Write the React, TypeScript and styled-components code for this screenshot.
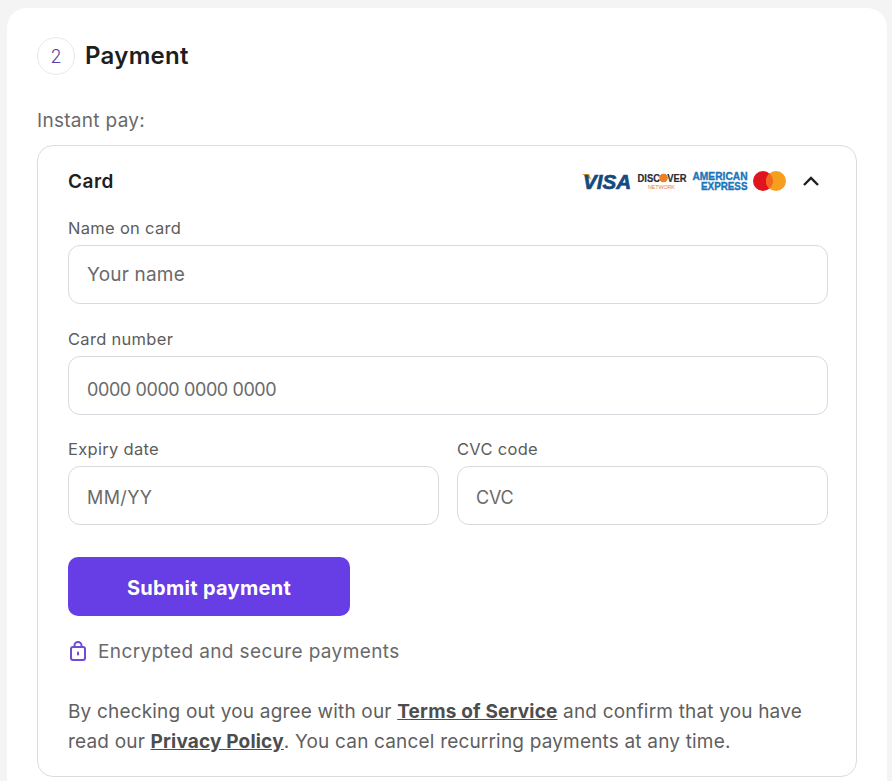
import React from 'react';
import styled, { createGlobalStyle } from 'styled-components';

const GlobalStyle = createGlobalStyle`
  html, body {
    margin: 0;
    padding: 0;
    background: #f4f4f5;
    font-family: 'Inter', 'Liberation Sans', sans-serif;
  }
  * { box-sizing: border-box; }
`;

const Page = styled.div`
  width: 892px;
  height: 781px;
  overflow: hidden;
  padding: 8px 7px 0;
`;

const Panel = styled.section`
  width: 880px;
  background: #fff;
  border-radius: 20px 20px 0 0;
  padding: 29px 30px 0;
  height: 790px;
`;

const Header = styled.div`
  display: flex;
  align-items: center;
  gap: 10px;
  height: 38px;
`;

const StepBadge = styled.div`
  width: 38px;
  height: 38px;
  border-radius: 50%;
  border: 1px solid #e8e8ee;
  color: #5b3fa8;
  font-size: 18px;
  font-weight: 300;
  display: flex;
  align-items: center;
  justify-content: center;
`;

const Title = styled.h2`
  margin: 0 0 1px;
  font-size: 24px;
  font-weight: 600;
  color: #1d1e20;
  letter-spacing: 0.3px;
`;

const Instant = styled.div`
  margin-top: 31px;
  font-size: 19px;
  line-height: 30px;
  color: #6a6a6a;
  letter-spacing: 0.3px;
`;

const MethodCard = styled.div`
  margin-top: 9px;
  width: 820px;
  border: 1px solid #dadce0;
  border-radius: 16px;
  padding: 20px 28px 0 30px;
  height: 632px;
`;

const MethodHeader = styled.div`
  display: flex;
  align-items: center;
  justify-content: space-between;
  height: 30px;
`;

const MethodTitle = styled.div`
  font-size: 19px;
  font-weight: 600;
  color: #1d1e20;
  letter-spacing: 0.5px;
`;

const Brands = styled.div`
  display: flex;
  align-items: center;
  gap: 5px;
  margin-right: 7px;
`;

const Field = styled.label<{ $top?: number }>`
  display: block;
  margin-top: ${p => p.$top ?? 0}px;
  flex: 1;
`;

const FieldLabel = styled.div`
  font-size: 16.5px;
  line-height: 24px;
  color: #5c5c5c;
  letter-spacing: 0.3px;
  margin-bottom: 5px;
`;

const Input = styled.input<{ $size?: number; $spacing?: number; $shift?: number }>`
  display: block;
  width: 100%;
  height: 59px;
  border: 1px solid #d8dae0;
  border-radius: 12px;
  padding: ${p => p.$shift ?? 0}px 18px 0;
  font-family: inherit;
  font-size: ${p => p.$size ?? 18}px;
  background: #fff;
  outline: none;
  letter-spacing: ${p => p.$spacing ?? -0.2}px;
  &::placeholder {
    color: #6a6a6a;
    opacity: 1;
  }
`;

const TwoCol = styled.div`
  display: flex;
  gap: 18px;
  margin-top: 22px;
`;

const SubmitButton = styled.button`
  display: block;
  margin-top: 32px;
  width: 282px;
  height: 59px;
  padding: 2px 0 0;
  border: none;
  border-radius: 10px;
  background: #673de6;
  color: #fff;
  font-family: inherit;
  font-size: 20px;
  font-weight: 700;
  letter-spacing: 0.3px;
`;

const SecureRow = styled.div`
  display: flex;
  align-items: center;
  gap: 10px;
  margin-top: 20px;
  height: 30px;
  font-size: 19px;
  color: #6a6a6a;
  letter-spacing: 0.38px;
`;

const Terms = styled.p`
  margin: 31px 0 0;
  font-size: 19px;
  line-height: 30px;
  color: #5f5f5f;
  letter-spacing: 0.18px;
  a {
    color: #4d4d4d;
    font-weight: 700;
    text-decoration: underline;
  }
`;

const Visa = () => (
  <svg width="50" height="20" viewBox="0 0 50 20">
    <path d="M0 3h7l2.5 6z" fill="#e59a2c" />
    <text x="1" y="17.5" fontFamily="Liberation Sans" fontSize="21" fontWeight="700" fontStyle="italic" fill="#14497f" stroke="#14497f" strokeWidth="0.7" textLength="48" lengthAdjust="spacingAndGlyphs">VISA</text>
  </svg>
);

const Discover = () => (
  <svg width="50" height="24" viewBox="0 0 50 24">
    <text x="0.5" y="13" fontFamily="Liberation Sans" fontSize="11" fontWeight="700" fill="#2a2a2e" stroke="#2a2a2e" strokeWidth="0.2" textLength="49" lengthAdjust="spacingAndGlyphs">DISCOVER</text>
    <circle cx="26.5" cy="9" r="4.2" fill="#ee7f22" />
    <text x="11" y="20" fontFamily="Liberation Sans" fontSize="5.5" fill="#e8853a" textLength="27">NETWORK</text>
  </svg>
);

const Amex = () => (
  <svg width="56" height="20" viewBox="0 0 56 20">
    <text x="0.5" y="9" fontFamily="Liberation Sans" fontSize="10" fontWeight="700" fill="#1a75bb" stroke="#1a75bb" strokeWidth="0.35" textLength="55" lengthAdjust="spacingAndGlyphs">AMERICAN</text>
    <text x="9" y="18.5" fontFamily="Liberation Sans" fontSize="10" fontWeight="700" fill="#1a75bb" stroke="#1a75bb" strokeWidth="0.35" textLength="46.5" lengthAdjust="spacingAndGlyphs">EXPRESS</text>
  </svg>
);

const MasterCard = () => (
  <svg width="33" height="20" viewBox="0 0 33 20">
    <circle cx="10" cy="10" r="10" fill="#e0141f" />
    <circle cx="23" cy="10" r="10" fill="#f69e1e" />
    <path d="M16.5 2.4a10 10 0 0 1 0 15.2a10 10 0 0 1 0-15.2z" fill="#f4671f" />
  </svg>
);

const Chevron = () => (
  <svg width="20" height="12" viewBox="0 0 20 12" style={{ marginLeft: 10 }}>
    <path d="M3 10l7-7 7 7" fill="none" stroke="#1d1e20" strokeWidth="2.4" />
  </svg>
);

const Lock = () => (
  <svg width="20" height="22" viewBox="0 0 20 22">
    <rect x="3" y="7" width="14" height="13" rx="2" fill="none" stroke="#6f4bd8" strokeWidth="2" />
    <path d="M6.5 7V5.5a3.5 3.5 0 0 1 7 0V7" fill="none" stroke="#6f4bd8" strokeWidth="2" />
    <rect x="9" y="11.5" width="2" height="4" rx="1" fill="#6f4bd8" />
  </svg>
);

export default function App() {
  return (
    <>
      <GlobalStyle />
      <Page>
        <Panel>
          <Header>
            <StepBadge>2</StepBadge>
            <Title>Payment</Title>
          </Header>
          <Instant>Instant pay:</Instant>
          <MethodCard>
            <MethodHeader>
              <MethodTitle>Card</MethodTitle>
              <Brands>
                <Visa />
                <Discover />
                <Amex />
                <MasterCard />
                <Chevron />
              </Brands>
            </MethodHeader>
            <Field $top={20}>
              <FieldLabel>Name on card</FieldLabel>
              <Input placeholder="Your name" $size={19} $spacing={0.2} />
            </Field>
            <Field $top={23}>
              <FieldLabel>Card number</FieldLabel>
              <Input placeholder="0000 0000 0000 0000" $spacing={-0.4} $shift={8} />
            </Field>
            <TwoCol>
              <Field>
                <FieldLabel>Expiry date</FieldLabel>
                <Input placeholder="MM/YY" $spacing={0.4} $shift={4} />
              </Field>
              <Field>
                <FieldLabel>CVC code</FieldLabel>
                <Input placeholder="CVC" $shift={4} />
              </Field>
            </TwoCol>
            <SubmitButton>Submit payment</SubmitButton>
            <SecureRow>
              <Lock />
              Encrypted and secure payments
            </SecureRow>
            <Terms>
              By checking out you agree with our <a href="#terms">Terms of Service</a> and confirm that you have read our{' '}
              <a href="#privacy">Privacy Policy</a>. You can cancel recurring payments at any time.
            </Terms>
          </MethodCard>
        </Panel>
      </Page>
    </>
  );
}
